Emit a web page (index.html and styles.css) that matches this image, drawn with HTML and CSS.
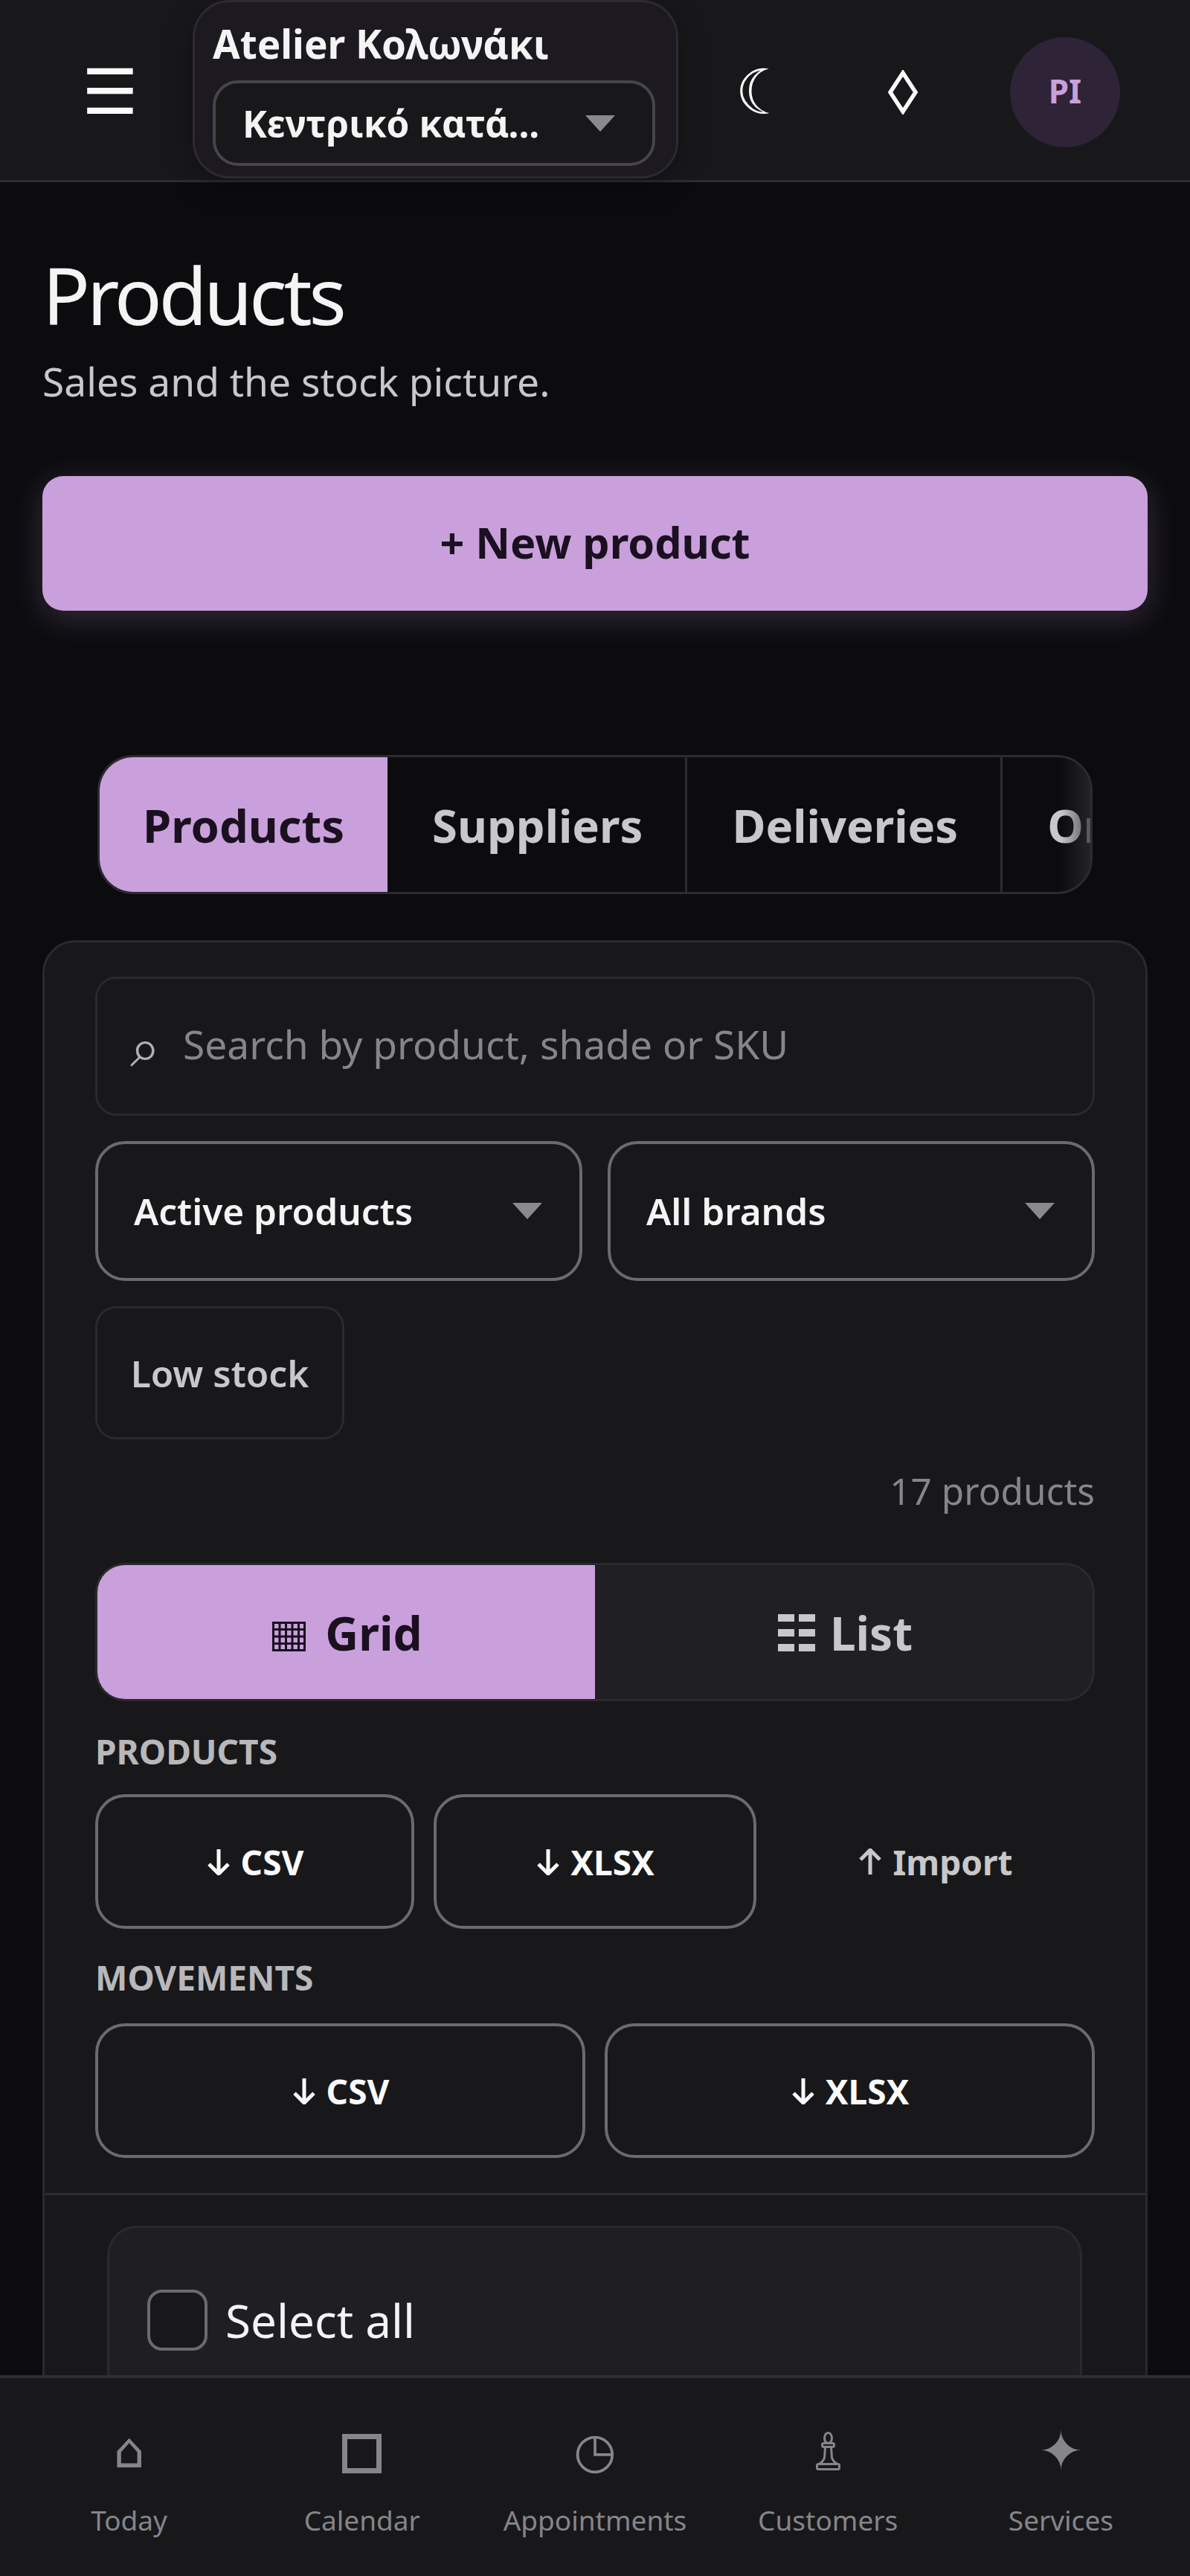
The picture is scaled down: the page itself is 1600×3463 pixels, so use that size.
FILE: index.html
```html
<!DOCTYPE html>
<html lang="en">
  <head>
    <meta charset="UTF-8" />
    <meta name="viewport" content="width=device-width, initial-scale=1.0" />
    <title>Products</title>
    <link rel="stylesheet" href="styles.css">
  </head>
  <body>
    <header class="topbar">
      <button class="menu-btn">☰</button>
      <div class="store-box">
        <div class="store-name">Atelier Κολωνάκι</div>
        <div class="store-select">
          <span class="store-select-text">Κεντρικό κατά...</span>
          <span class="caret"></span>
        </div>
      </div>
      <div class="top-actions">
        <button class="icon-btn icon-moon">☾</button>
        <button class="icon-btn">
          <svg class="diamond" viewBox="0 0 42 60"><path d="M21 4 L38 30 L21 56 L4 30 Z" /></svg>
        </button>
        <div class="avatar">PI</div>
      </div>
    </header>

    <main class="page">
      <h1>Products</h1>
      <p class="subtitle">Sales and the stock picture.</p>
      <button class="new-btn">+ New product</button>

      <nav class="tabs">
        <a class="tab tab-active">Products</a>
        <a class="tab">Suppliers</a>
        <a class="tab">Deliveries</a>
        <a class="tab">Orders</a>
      </nav>

      <section class="card">
        <div class="toolbar">
          <div class="search">
            <span class="search-icon">⌕</span>
            <span class="search-text">Search by product, shade or SKU</span>
          </div>
          <div class="filters">
            <div class="select"><span>Active products</span><span class="caret"></span></div>
            <div class="select"><span>All brands</span><span class="caret"></span></div>
          </div>
          <button class="chip">Low stock</button>
          <div class="count">17 products</div>
          <div class="view-toggle">
            <button class="view-btn view-active">
              <svg class="grid-icon" viewBox="0 0 45 40">
                <rect x="1.5" y="1.5" width="42" height="37" />
                <path d="M10 1v38M18.5 1v38M27 1v38M35.5 1v38M1 10.5h43M1 20h43M1 29.5h43" />
              </svg>
              Grid
            </button>
            <button class="view-btn">
              <svg class="list-icon" viewBox="0 0 50 50">
                <path d="M0 5h22M28 5h22M0 25h22M28 25h22M0 45h22M28 45h22" />
              </svg>
              List
            </button>
          </div>
          <div class="group-label">PRODUCTS</div>
          <div class="export-row export-three">
            <button class="export-btn"><svg class="arrow" viewBox="0 0 34 36"><path d="M17 1v33M4 21l13 13 13-13" /></svg>CSV</button>
            <button class="export-btn"><svg class="arrow" viewBox="0 0 34 36"><path d="M17 1v33M4 21l13 13 13-13" /></svg>XLSX</button>
            <button class="export-btn export-ghost"><svg class="arrow" viewBox="0 0 34 36"><path d="M17 35V2M4 15L17 2l13 13" /></svg>Import</button>
          </div>
          <div class="group-label group-second">MOVEMENTS</div>
          <div class="export-row export-two">
            <button class="export-btn"><svg class="arrow" viewBox="0 0 34 36"><path d="M17 1v33M4 21l13 13 13-13" /></svg>CSV</button>
            <button class="export-btn"><svg class="arrow" viewBox="0 0 34 36"><path d="M17 1v33M4 21l13 13 13-13" /></svg>XLSX</button>
          </div>
        </div>
        <div class="select-card">
          <label class="select-all">
            <span class="checkbox"></span>
            <span>Select all</span>
          </label>
        </div>
      </section>
    </main>

    <footer class="bottom-nav">
      <a class="nav-item"><span class="nav-icon">⌂</span><span>Today</span></a>
      <a class="nav-item"><span class="nav-icon"><span class="nav-square"></span></span><span>Calendar</span></a>
      <a class="nav-item"><span class="nav-icon">◷</span><span>Appointments</span></a>
      <a class="nav-item">
        <span class="nav-icon">
          <svg class="pawn" viewBox="0 0 37 52">
            <ellipse cx="18.5" cy="8.5" rx="5" ry="7" />
            <rect x="10.5" y="15.5" width="16" height="5" rx="2" />
            <path d="M14.5 20.5 L13.5 35 Q12 40 6 43.5 M22.5 20.5 L23.5 35 Q25 40 31 43.5" />
            <rect x="3.5" y="43.5" width="30" height="7" rx="2" />
          </svg>
        </span>
        <span>Customers</span>
      </a>
      <a class="nav-item"><span class="nav-icon nav-icon-star">✦</span><span>Services</span></a>
    </footer>
  </body>
</html>
```

FILE: styles.css
```css
* {
  box-sizing: border-box;
}

html,
body {
  height: 100%;
}

body {
  margin: 0;
  display: flex;
  flex-direction: column;
  overflow: hidden;
  background-color: #0c0c0f;
  color: #f4f4f5;
  font-family: "Noto Sans", "DejaVu Sans", sans-serif;
}

button {
  font-family: inherit;
  color: inherit;
  background: none;
  border: none;
  padding: 0;
}

.caret {
  width: 0;
  height: 0;
  flex: none;
  border-left: 20px solid transparent;
  border-right: 20px solid transparent;
  border-top: 22px solid #8a8a8e;
}

/* top bar */
.topbar {
  flex: none;
  height: 245px;
  display: flex;
  align-items: flex-start;
  padding: 0 94px 0 62px;
  background-color: #18181b;
  border-bottom: 3px solid #2e2e32;
}

.menu-btn {
  width: 172px;
  height: 242px;
  margin-right: 25px;
  font-family: "DejaVu Sans", sans-serif;
  font-size: 84px;
  font-weight: 700;
  line-height: 248px;
  color: #fafafa;
}

.store-box {
  width: 653px;
  height: 240px;
  padding: 22px 28px 0 24px;
  background-color: #1c1a20;
  border: 3px solid #2c2a30;
  border-radius: 50px;
  box-shadow: 0 10px 40px rgba(0, 0, 0, 0.3);
}

.store-name {
  font-size: 53px;
  font-weight: 700;
  line-height: 68px;
  white-space: nowrap;
}

.store-select {
  height: 115px;
  margin-top: 15px;
  display: flex;
  align-items: center;
  justify-content: space-between;
  padding: 0 50px 0 36px;
  background-color: #18181b;
  border: 4px solid #47444c;
  border-radius: 34px;
  font-size: 49.5px;
  font-weight: 700;
}

.store-select-text {
  white-space: nowrap;
}

.top-actions {
  margin-left: auto;
  height: 242px;
  display: flex;
  align-items: flex-start;
  gap: 27px;
}

.icon-btn {
  width: 170px;
  height: 248px;
  color: #fafafa;
}

.icon-moon {
  padding-left: 18px;
  font-family: "DejaVu Sans", sans-serif;
  font-size: 84px;
  font-weight: 700;
  line-height: 244px;
}

.diamond {
  display: block;
  width: 42px;
  height: 60px;
  margin: 0 auto 0;
  fill: none;
  stroke: #fafafa;
  stroke-width: 5.5;
}

.avatar {
  width: 148px;
  height: 148px;
  margin: 50px 0 0 32px;
  padding-bottom: 4px;
  display: flex;
  align-items: center;
  justify-content: center;
  border-radius: 50%;
  background-color: #2e2337;
  color: #c9a0dc;
  font-size: 44px;
  font-weight: 700;
}

/* page */
.page {
  flex: 1;
  min-height: 0;
  overflow: hidden;
  padding: 0 57px;
}

h1 {
  margin: 88px 0 0;
  font-size: 106px;
  font-weight: 400;
  line-height: 126px;
  letter-spacing: -4.5px;
}

.subtitle {
  margin: 18px 0 0;
  font-size: 53.3px;
  line-height: 72px;
  color: #c8c8ca;
}

.new-btn {
  display: block;
  width: 100%;
  height: 181px;
  margin-top: 91px;
  padding-bottom: 3px;
  background-color: #c9a0dc;
  border-radius: 28px;
  box-shadow: 0 10px 44px rgba(201, 160, 220, 0.22);
  color: #1a1020;
  font-size: 57.5px;
  font-weight: 700;
}

.tabs {
  position: relative;
  height: 187px;
  margin: 194px 74px 0 74px;
  display: flex;
  overflow: hidden;
  border: 3px solid #2b2b30;
  border-radius: 48px;
}

.tabs::after {
  content: "";
  position: absolute;
  top: 0;
  right: 0;
  bottom: 0;
  width: 40px;
  background: linear-gradient(to right, rgba(44, 44, 48, 0), rgba(44, 44, 48, 0.75));
}

.tab {
  flex: none;
  display: flex;
  align-items: center;
  padding: 0 57px 0 60px;
  border-right: 3px solid #2b2b30;
  color: #c8c8ca;
  font-size: 61.5px;
  font-weight: 700;
  white-space: nowrap;
}

.tab-active {
  padding: 0 58px;
  background-color: #c9a0dc;
  border-right: none;
  color: #1a1020;
}

/* main card */
.card {
  margin-top: 62px;
  height: 2100px;
  background-color: #18181b;
  border: 3px solid #2a2a2e;
  border-radius: 44px;
}

.toolbar {
  padding: 46px 68px 47px;
  border-bottom: 3px solid #2e2e32;
}

.search {
  height: 187px;
  display: flex;
  align-items: center;
  padding: 0 44px;
  border: 3px solid #2a2a2e;
  border-radius: 28px;
  font-size: 53.3px;
  color: #85858a;
}

.search-icon {
  width: 71px;
  flex: none;
  padding-top: 4px;
  color: #b0b0b3;
  font-family: "DejaVu Sans", sans-serif;
  font-size: 72px;
}

.search-text {
  padding-bottom: 6px;
}

.filters {
  margin-top: 34px;
  display: grid;
  grid-template-columns: 1fr 1fr;
  gap: 34px;
}

.select {
  height: 188px;
  display: flex;
  align-items: center;
  justify-content: space-between;
  padding: 0 50px 0 48px;
  border: 4px solid #6a6a6f;
  border-radius: 40px;
  font-size: 49.5px;
  font-weight: 600;
}

.chip {
  display: block;
  height: 179px;
  width: 335px;
  margin-top: 34px;
  border: 3px solid #2a2a2e;
  border-radius: 28px;
  color: #c8c8ca;
  font-size: 49.5px;
  font-weight: 600;
}

.count {
  margin-top: 39px;
  font-size: 49.5px;
  line-height: 60px;
  text-align: right;
  color: #85858a;
}

.view-toggle {
  height: 186px;
  margin-top: 67px;
  display: grid;
  grid-template-columns: 1fr 1fr;
  overflow: hidden;
  background-color: #202024;
  border: 3px solid #2a2a2e;
  border-radius: 40px;
}

.view-btn {
  display: flex;
  align-items: center;
  justify-content: center;
  padding: 2px 0 0 4px;
  color: #c8c8ca;
  font-size: 62px;
  font-weight: 700;
}

.view-active {
  gap: 26px;
  padding-left: 3px;
  background-color: #c9a0dc;
  color: #1a1020;
}

.grid-icon {
  width: 45px;
  height: 40px;
  margin-top: 10px;
  fill: none;
  stroke: #1a1020;
  stroke-width: 3;
}

.list-icon {
  width: 50px;
  height: 50px;
  margin-right: 20px;
  fill: none;
  stroke: #c8c8ca;
  stroke-width: 10;
}

.group-label {
  margin-top: 42px;
  font-size: 46px;
  font-weight: 700;
  line-height: 50px;
  color: #b8b8ba;
}

.group-second {
  margin-top: 40px;
}

.export-row {
  display: grid;
  gap: 26px;
  margin-top: 33px;
}

.export-three {
  grid-template-columns: 429fr 434fr 429fr;
}

.export-two {
  grid-template-columns: 1fr 1fr;
  margin-top: 37px;
}

.export-btn {
  height: 181px;
  display: flex;
  align-items: center;
  justify-content: center;
  gap: 13px;
  border: 4px solid #6a6a6f;
  border-radius: 40px;
  font-size: 46px;
  font-weight: 700;
  color: #fafafa;
}

.export-ghost {
  border-color: transparent;
  color: #c8c8ca;
}

.arrow {
  width: 34px;
  height: 36px;
  fill: none;
  stroke: currentColor;
  stroke-width: 5;
}

.select-card {
  height: 600px;
  margin: 41px 85px 0 84px;
  padding: 82px 51px 0;
  background-color: #1f1f23;
  border: 3px solid #2a2a2e;
  border-radius: 40px;
}

.select-all {
  display: flex;
  align-items: center;
  gap: 24px;
  font-size: 62px;
}

.checkbox {
  width: 81px;
  height: 82px;
  background-color: #18181b;
  border: 4px solid #6a6a6f;
  border-radius: 20px;
}

/* bottom nav */
.bottom-nav {
  flex: none;
  height: 270px;
  display: grid;
  grid-template-columns: repeat(5, 1fr);
  padding: 0 17px;
  background-color: #18181b;
  border-top: 4px solid #2e2e32;
}

.nav-item {
  display: flex;
  flex-direction: column;
  align-items: center;
  padding-top: 62px;
  color: #85858a;
  font-size: 37px;
  line-height: 54px;
}

.nav-icon {
  height: 102px;
  font-family: "DejaVu Sans", sans-serif;
  font-size: 66px;
  line-height: 72px;
}

.nav-icon-star {
  font-size: 72px;
}

.nav-square {
  display: block;
  width: 53px;
  height: 53px;
  margin-top: 13px;
  border: 7px solid #85858a;
}

.pawn {
  display: block;
  width: 37px;
  height: 52px;
  margin-top: 10px;
  fill: none;
  stroke: #85858a;
  stroke-width: 3;
}
```
